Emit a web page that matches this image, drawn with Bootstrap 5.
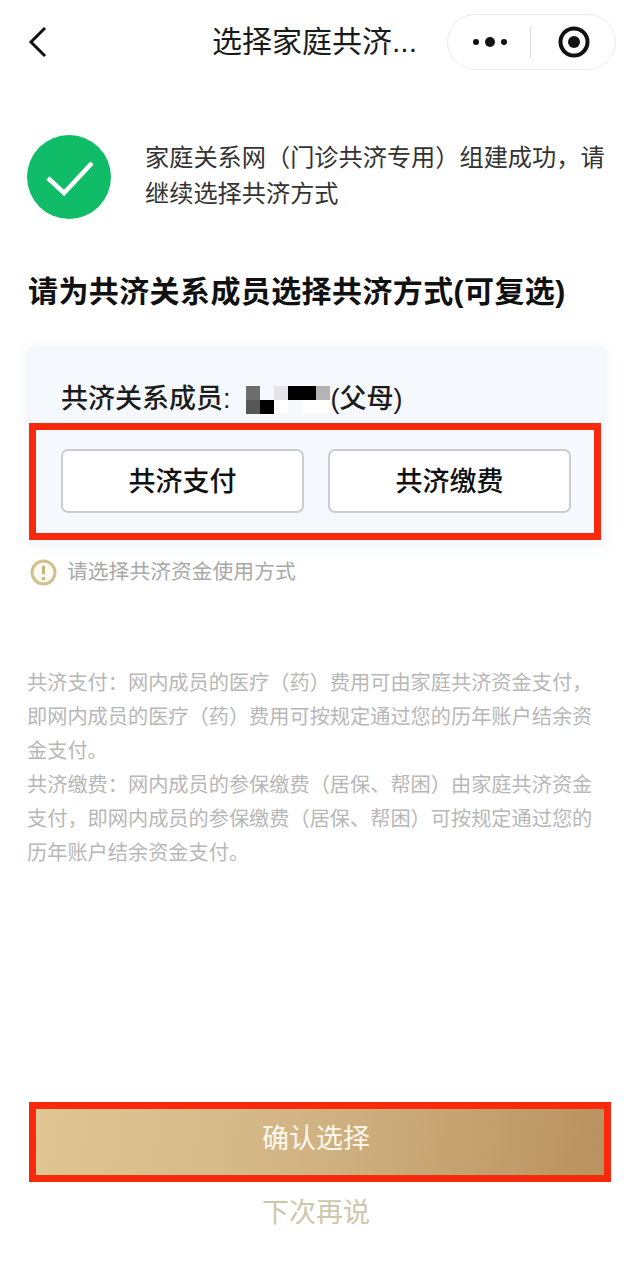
<!DOCTYPE html>
<html lang="zh-CN">
<head>
    <meta charset="UTF-8">
    <meta name="viewport" content="width=device-width, initial-scale=1.0">
    <link href="https://cdn.jsdelivr.net/npm/bootstrap@5.3.3/dist/css/bootstrap.min.css" rel="stylesheet">
    <title>选择家庭共济方式</title>
    <style>
        body {
            background-color: #fff;
            color: #111;
            font-family: "Liberation Sans", "Noto Sans CJK SC", sans-serif;
            height: 1265px;
            overflow: hidden;
        }
        .top-bar {
            height: 56px;
            margin-top: 14px;
            padding: 0 16px 0 27px;
        }
        .back-icon { width: 22px; height: 32px; margin-top: -1px; }
        .top-title {
            font-size: 30px;
            line-height: 56px;
            width: 212px;
            margin-left: 163px;
            white-space: nowrap;
            color: #1a1a1a;
        }
        .capsule {
            width: 169px;
            height: 56px;
            margin-left: auto;
            border: 1px solid #ececec;
            border-radius: 28px;
            padding: 0 23px 0 24px;
        }
        .capsule-line { width: 1px; height: 32px; background-color: #dedede; margin: 0 27px 0 22px; }
        .result-row { margin: 65px 20px 0 27px; }
        .result-text {
            font-size: 24.2px;
            line-height: 36px;
            color: #333;
            margin-left: 34px;
            padding-top: 5px;
        }
        .main-title {
            font-size: 30px;
            font-weight: 700;
            line-height: 40px;
            letter-spacing: .4px;
            margin: 53px 0 0 28px;
            white-space: nowrap;
        }
        .member-card {
            margin: 35px 27px 0 28px;
            height: 198px;
            background-color: #f5f8fd;
            box-shadow: 0 0 12px rgba(180, 190, 210, .22);
            border-radius: 4px;
            padding-top: 32px;
        }
        .member-line {
            font-size: 27px;
            font-weight: 500;
            line-height: 40px;
            padding-left: 33px;
            color: #1c1c1c;
            height: 44px;
        }
        .mosaic { width: 84px; height: 28px; margin: 7px 1px 0 15px; }
        .red-box {
            margin-left: 1px;
            width: 572px;
            height: 117px;
            border: 7px solid #f92a0c;
            padding: 19px 23px 0 25px;
        }
        .way-btn {
            width: 243px;
            height: 64px;
            background-color: #fff;
            border: 2px solid #c9ccd1;
            border-radius: 7px;
            font-size: 27px;
            font-weight: 500;
            line-height: 62px;
            padding: 0;
            color: #111;
        }
        .hint-row { margin: 12px 0 0 30px; color: #a8a8a8; font-size: 20.8px; line-height: 30px; }
        .hint-icon { width: 27px; height: 27px; margin-right: 10px; }
        .note-text {
            font-size: 20.2px;
            line-height: 34px;
            color: #b7b7b7;
            margin: 79px 27px 0 27px;
        }
        .confirm-btn {
            display: block;
            margin: auto 21px 0 29px;
            height: 80px;
            width: 582px;
            border: 7px solid #f92a0c;
            border-radius: 0;
            background: linear-gradient(100deg, #e0c693 0%, #d3b585 45%, #b8925f 100%);
            color: #fdf8ef;
            font-size: 27px;
            line-height: 60px;
            padding: 0 8px 6px 0;
        }
        .later-link {
            text-align: center;
            font-size: 27px;
            line-height: 40px;
            color: #cdc7ab;
            margin: 11px 0 32px 0;
        }
    </style>
</head>
<body class="d-flex flex-column">

    <!-- Top bar -->
    <div class="top-bar d-flex align-items-center">
        <svg class="back-icon" viewBox="0 0 22 32" fill="none" stroke="#111" stroke-width="3">
            <path d="M18 2 L4 16 L18 30"/>
        </svg>
        <div class="top-title">选择家庭共济...</div>
        <div class="capsule d-flex align-items-center">
            <svg width="36" height="12" viewBox="0 0 36 12" fill="#111">
                <circle cx="4" cy="6" r="3"/><circle cx="18" cy="6" r="5"/><circle cx="32" cy="6" r="3"/>
            </svg>
            <div class="capsule-line"></div>
            <svg width="32" height="32" viewBox="0 0 32 32">
                <circle cx="16" cy="16" r="13.5" fill="none" stroke="#111" stroke-width="4"/>
                <circle cx="16" cy="16" r="6" fill="#111"/>
            </svg>
        </div>
    </div>

    <!-- Result -->
    <div class="result-row d-flex">
        <svg class="flex-shrink-0" width="84" height="84" viewBox="0 0 84 84">
            <circle cx="42" cy="42" r="42" fill="#10bc67"/>
            <path d="M21 43 L37 58 L65 28" fill="none" stroke="#fff" stroke-width="4.5"/>
        </svg>
        <div class="result-text">家庭关系网（门诊共济专用）组建成功，请继续选择共济方式</div>
    </div>

    <h1 class="main-title">请为共济关系成员选择共济方式(可复选)</h1>

    <!-- Member card -->
    <div class="member-card">
        <div class="member-line d-flex align-items-start">
            <span>共济关系成员:</span>
            <svg class="mosaic" viewBox="0 0 84 28">
                <rect x="0" y="0" width="14" height="14" fill="#6e6e6e"/>
                <rect x="0" y="14" width="14" height="14" fill="#565656"/>
                <rect x="14" y="14" width="14" height="14" fill="#000"/>
                <rect x="28" y="0" width="14" height="14" fill="#e4e4ea"/>
                <rect x="42" y="0" width="28" height="14" fill="#000"/>
                <rect x="70" y="0" width="14" height="14" fill="#b4b4b4"/>
                <rect x="28" y="14" width="14" height="14" fill="#fff"/>
                <rect x="56" y="14" width="28" height="14" fill="#fff"/>
            </svg>
            <span>(父母)</span>
        </div>
        <div class="red-box d-flex justify-content-between">
            <button type="button" class="btn way-btn">共济支付</button>
            <button type="button" class="btn way-btn">共济缴费</button>
        </div>
    </div>

    <div class="hint-row d-flex align-items-center">
        <svg class="hint-icon" viewBox="0 0 27 27">
            <circle cx="13.5" cy="13.5" r="11.5" fill="#fdfaf2" stroke="#d1c08f" stroke-width="3"/>
            <rect x="12" y="6.5" width="3" height="9" rx="1.5" fill="#c7b37c"/>
            <circle cx="13.5" cy="19.5" r="1.8" fill="#c7b37c"/>
        </svg>
        <span>请选择共济资金使用方式</span>
    </div>

    <div class="note-text">
        <div>共济支付：网内成员的医疗（药）费用可由家庭共济资金支付，即网内成员的医疗（药）费用可按规定通过您的历年账户结余资金支付。</div>
        <div>共济缴费：网内成员的参保缴费（居保、帮困）由家庭共济资金支付，即网内成员的参保缴费（居保、帮困）可按规定通过您的历年账户结余资金支付。</div>
    </div>

    <button type="button" class="btn confirm-btn">确认选择</button>
    <div class="later-link">下次再说</div>

</body>
</html>
